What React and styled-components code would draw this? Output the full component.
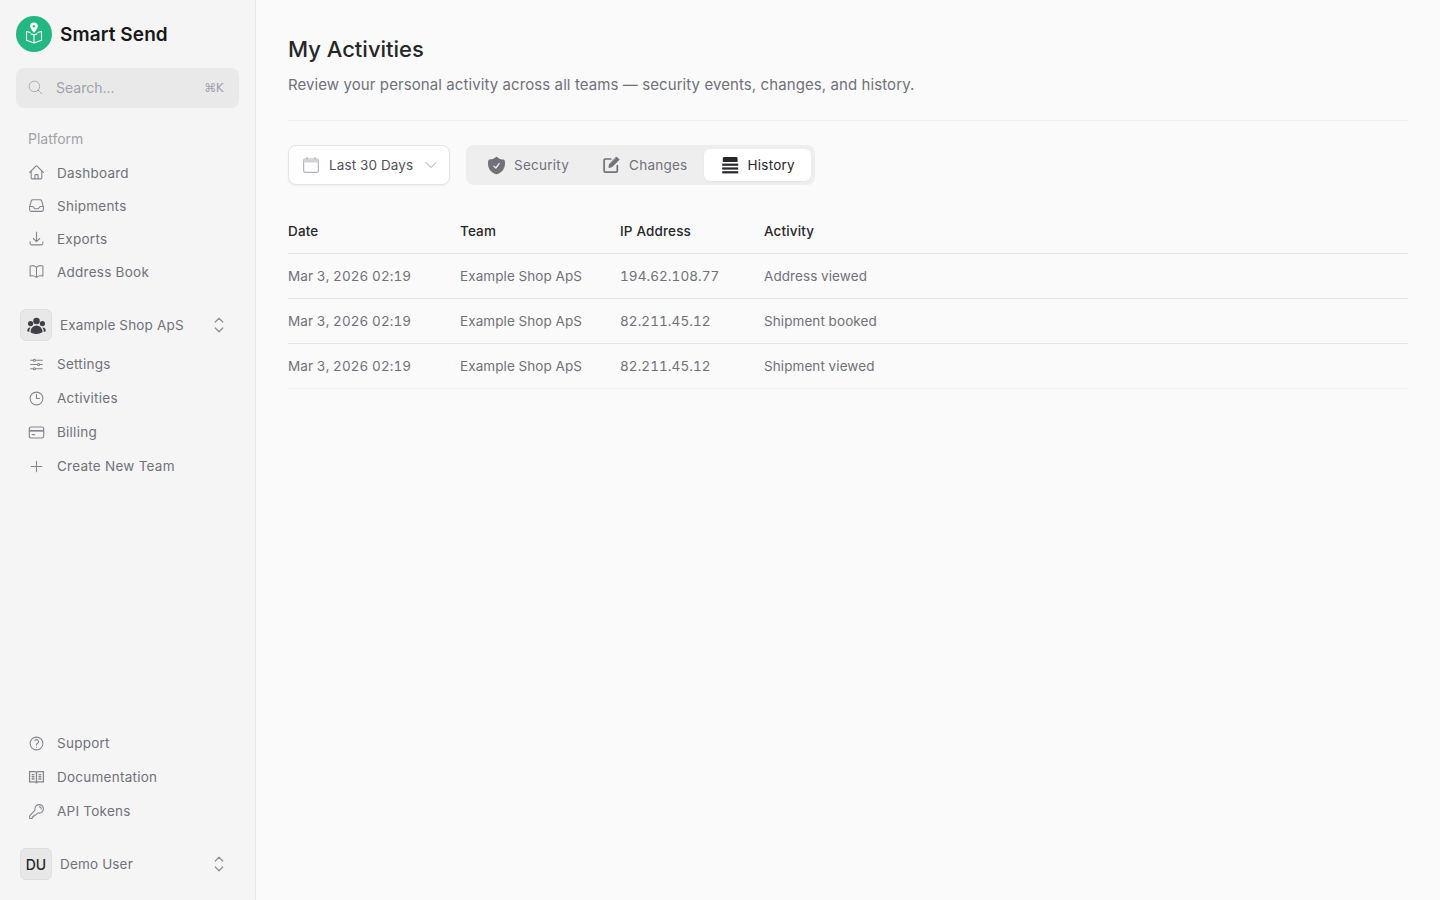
import React from 'react'
import styled, { createGlobalStyle } from 'styled-components'
import {
  HiOutlineHome,
  HiOutlineInbox,
  HiOutlineArrowDownTray,
  HiOutlineBookOpen,
  HiOutlineAdjustmentsHorizontal,
  HiOutlineClock,
  HiOutlinePlus,
  HiOutlineQuestionMarkCircle,
  HiOutlineKey,
  HiOutlineMagnifyingGlass,
  HiOutlineChevronUpDown,
  HiOutlineChevronDown,
  HiUserGroup,
  HiShieldCheck,
} from 'react-icons/hi2'

const GlobalStyle = createGlobalStyle`
  html, body {
    margin: 0;
    padding: 0;
    height: 100%;
    background: #fafafa;
    font-family: Inter, "Liberation Sans", sans-serif;
    -webkit-font-smoothing: antialiased;
  }
  * { box-sizing: border-box; }
`

const Layout = styled.div`
  display: flex;
  height: 900px;
  overflow: hidden;
`

const Sidebar = styled.aside`
  width: 256px;
  flex: none;
  height: 100%;
  background: #f5f5f5;
  border-right: 1px solid #e5e5e5;
  padding: 16px 16px 19px;
  display: flex;
  flex-direction: column;
`

const Brand = styled.div`
  display: flex;
  align-items: center;
  gap: 8px;
  height: 36px;
`

const BrandName = styled.span`
  font-size: 19px;
  font-weight: 600;
  letter-spacing: 0.1px;
  color: #18181b;
`

const LogoMark = styled.div`
  width: 36px;
  height: 36px;
  border-radius: 50%;
  background: #22b783;
  display: flex;
  align-items: center;
  justify-content: center;
`

const SearchBox = styled.div`
  margin-top: 16px;
  height: 40px;
  border-radius: 8px;
  background: #e9e9ea;
  display: flex;
  align-items: center;
  padding: 0 16px 1px 11px;
  color: #a1a1aa;
  font-size: 14px;
  svg { font-size: 17px; flex: none; stroke-width: 1.2; }
`

const SearchText = styled.span`
  margin-left: 12px;
  flex: 1;
`

const Shortcut = styled.span`
  font-size: 12px;
  font-family: "DejaVu Sans", Inter, sans-serif;
  letter-spacing: -0.5px;
`

const SectionLabel = styled.div`
  margin-top: 22px;
  padding-left: 12px;
  height: 18px;
  line-height: 18px;
  font-size: 14px;
  color: #a1a1aa;
`

const NavList = styled.nav`
  display: flex;
  flex-direction: column;
  margin-top: ${(p) => p.$top || 0}px;
`

const NavItem = styled.a`
  height: ${(p) => p.$height || 33}px;
  display: flex;
  align-items: center;
  gap: 12px;
  padding-left: 12px;
  color: #71717a;
  font-size: 13.5px;
  letter-spacing: 0.25px;
  svg { width: 17px; height: 17px; flex: none; color: #85858e; }
`

const Switcher = styled.div`
  height: 34px;
  display: flex;
  align-items: center;
  padding: 0 8px 0 4px;
  margin-top: ${(p) => p.$top || 0}px;
  color: #71717a;
  font-size: 13.5px;
  letter-spacing: 0.16px;
`

const Avatar = styled.div`
  width: 32px;
  height: 32px;
  flex: none;
  border-radius: 6px;
  background: #e8e8e9;
  border: 1px solid #dedee0;
  display: flex;
  align-items: center;
  justify-content: center;
  color: #27272a;
  font-size: 14px;
  font-weight: 500;
  letter-spacing: 0;
  svg { font-size: 21px; color: #3f3f46; }
`

const SwitcherName = styled.span`
  margin-left: 8px;
  flex: 1;
`

const UpDown = styled(HiOutlineChevronUpDown)`
  font-size: 24px;
  flex: none;
  stroke-width: 1.3;
  color: #8f8f98;
`

const Spacer = styled.div`
  flex: 1;
`

const Main = styled.main`
  flex: 1;
  min-width: 0;
  padding: 32px 32px 0;
`

const Title = styled.h1`
  margin: 0;
  font-size: 22px;
  line-height: 34px;
  font-weight: 500;
  color: #27272a;
`

const Subtitle = styled.p`
  margin: 7px 0 0;
  font-size: 15px;
  line-height: 24px;
  letter-spacing: 0.09px;
  color: #71717a;
`

const Divider = styled.hr`
  margin: 23px 0 24px;
  border: 0;
  border-top: 1px solid #efeff0;
`

const Toolbar = styled.div`
  display: flex;
  align-items: center;
  gap: 16px;
`

const DateSelect = styled.div`
  width: 162px;
  height: 40px;
  background: #fff;
  border: 1px solid #e4e4e7;
  border-radius: 8px;
  box-shadow: 0 1px 2px rgba(0, 0, 0, 0.05);
  display: flex;
  align-items: center;
  padding: 0 10px 0 13px;
  color: #52525b;
  font-size: 13.5px;
`

const DateLabel = styled.span`
  margin-left: 9px;
  flex: 1;
  letter-spacing: 0.1px;
`

const SelectChevron = styled(HiOutlineChevronDown)`
  font-size: 16px;
  flex: none;
  color: #a1a1aa;
`

const Tabs = styled.div`
  height: 40px;
  padding: 4px;
  background: #eeeeef;
  border-radius: 8px;
  display: flex;
  align-items: center;
`

const Tab = styled.div`
  height: 32px;
  padding: 0 16px 0 18px;
  display: flex;
  align-items: center;
  gap: 8px;
  border-radius: 6px;
  font-size: 13.5px;
  letter-spacing: 0.25px;
  color: ${(p) => (p.$active ? '#27272a' : '#71717a')};
  background: ${(p) => (p.$active ? '#fff' : 'transparent')};
  box-shadow: ${(p) => (p.$active ? '0 1px 2px rgba(0,0,0,0.05)' : 'none')};
  svg { width: 18px; height: 18px; flex: none; }
`

const ShieldIcon = styled(HiShieldCheck)`
  && { width: 21px; height: 21px; margin: 0 -1px 0 -2px; }
`

const Table = styled.table`
  width: 100%;
  margin-top: 23px;
  border-collapse: collapse;
  table-layout: fixed;
  font-size: 13.5px;
`

const Th = styled.th`
  height: 45px;
  padding: 1px 0 0;
  text-align: left;
  font-weight: 500;
  letter-spacing: 0.15px;
  color: #27272a;
  border-bottom: 1px solid #e4e4e7;
  width: ${(p) => p.$width || 'auto'};
`

const Td = styled.td`
  height: 45px;
  padding: 0;
  color: #71717a;
  font-variant-numeric: tabular-nums;
  letter-spacing: 0.08px;
  border-bottom: 1px solid #e4e4e7;
`

const LastRow = styled.tr`
  td { border-bottom-color: #f0f0f1; }
`

const Logo = () => (
  <svg width="24" height="24" viewBox="0 0 24 24" fill="none" stroke="#fff" strokeWidth="1.1" strokeLinejoin="round">
    <path d="M12 1c-1.900 0-3.300 1.400-3.300 3.200 0 2 1.800 3.800 3.300 5.800 1.500-2 3.300-3.800 3.300-5.800C15.300 2.400 13.900 1 12 1z" fill="#fff" />
    <circle cx="12" cy="4.200" r="1.200" fill="#22b783" stroke="none" />
    <path d="M8.500 10.500 4.500 9.500v8.700L12 21l7.500-2.800V9.500l-4 1" />
    <path d="M12 12.800V21" />
    <path d="M8.500 11.800 12 12.800l3.500-1" />
  </svg>
)

const BillingIcon = () => (
  <svg viewBox="0 0 16 16" fill="none" stroke="currentColor" strokeWidth="1.100">
    <rect x="1.200" y="2.800" width="13.600" height="10.400" rx="1.800" />
    <path d="M1.200 6.400h13.600" strokeWidth="1.600" />
    <path d="M3.500 10h3.200" />
  </svg>
)

const DocsIcon = () => (
  <svg viewBox="0 0 16 16" fill="none" stroke="currentColor" strokeWidth="1.200">
    <path d="M1.500 2.500h5.200c.7 0 1.300.5 1.300 1.200 0-.7.6-1.200 1.300-1.200h5.200v9.700H9.500c-.8 0-1.500.5-1.500 1.300 0-.8-.7-1.300-1.500-1.300h-5z" />
    <path d="M8 3.700v9.800M3.500 5.200h2.600M3.500 7.300h2.600M3.500 9.400h2.600M9.900 5.200h2.600M9.900 7.300h2.600M9.900 9.400h2.600" />
  </svg>
)

const CalendarIcon = () => (
  <svg width="18" height="18" viewBox="0 0 18 18" fill="none" stroke="#b4b4ba" strokeWidth="1.200">
    <rect x="1.600" y="3" width="14.800" height="13.400" rx="1.600" />
    <path d="M1.600 3.500h14.800v3H1.600z" fill="#d4d4d8" stroke="none" />
    <path d="M5 1.200v2.600M13 1.200v2.600" />
  </svg>
)

const ChangesIcon = () => (
  <svg viewBox="0 0 18 18" fill="none" stroke="currentColor" strokeWidth="1.700" strokeLinejoin="round" strokeLinecap="round">
    <path d="M7.800 3H2.300a1.200 1.200 0 0 0-1.200 1.200V15a1.200 1.200 0 0 0 1.200 1.200h10.800a1.200 1.200 0 0 0 1.200-1.200V9.500" />
    <path d="M13.700 1.200 16.100 3.600 8.900 10.800 5.900 11.400 6.500 8.400z" fill="currentColor" strokeWidth="1" />
  </svg>
)

const HistoryIcon = () => (
  <svg viewBox="0 0 18 18" fill="currentColor">
    <path d="M2.200 1h12a1.400 1.400 0 0 1 1.400 1.400V6H.8V2.400A1.400 1.400 0 0 1 2.200 1z" />
    <rect x="0.200" y="7.600" width="16" height="2.200" />
    <rect x="0.200" y="11.400" width="16" height="2.200" />
    <rect x="0.200" y="15.200" width="16" height="2.200" />
  </svg>
)

const platformLinks = [
  { label: 'Dashboard', icon: <HiOutlineHome /> },
  { label: 'Shipments', icon: <HiOutlineInbox /> },
  { label: 'Exports', icon: <HiOutlineArrowDownTray /> },
  { label: 'Address Book', icon: <HiOutlineBookOpen /> },
]

const teamLinks = [
  { label: 'Settings', icon: <HiOutlineAdjustmentsHorizontal /> },
  { label: 'Activities', icon: <HiOutlineClock /> },
  { label: 'Billing', icon: <BillingIcon /> },
  { label: 'Create New Team', icon: <HiOutlinePlus /> },
]

const footerLinks = [
  { label: 'Support', icon: <HiOutlineQuestionMarkCircle /> },
  { label: 'Documentation', icon: <DocsIcon /> },
  { label: 'API Tokens', icon: <HiOutlineKey /> },
]

const rows = [
  { date: 'Mar 3, 2026 02:19', team: 'Example Shop ApS', ip: '194.62.108.77', activity: 'Address viewed' },
  { date: 'Mar 3, 2026 02:19', team: 'Example Shop ApS', ip: '82.211.45.12', activity: 'Shipment booked' },
  { date: 'Mar 3, 2026 02:19', team: 'Example Shop ApS', ip: '82.211.45.12', activity: 'Shipment viewed' },
]

function Links({ items, height }) {
  return items.map((item) => (
    <NavItem key={item.label} $height={height}>
      {item.icon}
      {item.label}
    </NavItem>
  ))
}

export default function App() {
  return (
    <Layout>
      <GlobalStyle />
      <Sidebar>
        <Brand>
          <LogoMark>
            <Logo />
          </LogoMark>
          <BrandName>Smart Send</BrandName>
        </Brand>

        <SearchBox>
          <HiOutlineMagnifyingGlass />
          <SearchText>Search...</SearchText>
          <Shortcut>⌘K</Shortcut>
        </SearchBox>

        <SectionLabel>Platform</SectionLabel>
        <NavList $top={8}>
          <Links items={platformLinks} />
        </NavList>

        <Switcher $top={20}>
          <Avatar>
            <HiUserGroup />
          </Avatar>
          <SwitcherName>Example Shop ApS</SwitcherName>
          <UpDown />
        </Switcher>
        <NavList $top={5}>
          <Links items={teamLinks} height={34} />
        </NavList>

        <Spacer />

        <NavList>
          <Links items={footerLinks} height={34} />
        </NavList>
        <Switcher $top={19}>
          <Avatar>DU</Avatar>
          <SwitcherName>Demo User</SwitcherName>
          <UpDown />
        </Switcher>
      </Sidebar>

      <Main>
        <Title>My Activities</Title>
        <Subtitle>Review your personal activity across all teams — security events, changes, and history.</Subtitle>
        <Divider />

        <Toolbar>
          <DateSelect>
            <CalendarIcon />
            <DateLabel>Last 30 Days</DateLabel>
            <SelectChevron />
          </DateSelect>
          <Tabs>
            <Tab>
              <ShieldIcon />
              Security
            </Tab>
            <Tab>
              <ChangesIcon />
              Changes
            </Tab>
            <Tab $active>
              <HistoryIcon />
              History
            </Tab>
          </Tabs>
        </Toolbar>

        <Table>
          <thead>
            <tr>
              <Th $width="172px">Date</Th>
              <Th $width="160px">Team</Th>
              <Th $width="144px">IP Address</Th>
              <Th>Activity</Th>
            </tr>
          </thead>
          <tbody>
            {rows.map((row, i) => {
              const Row = i === rows.length - 1 ? LastRow : 'tr'
              return (
                <Row key={i}>
                  <Td>{row.date}</Td>
                  <Td>{row.team}</Td>
                  <Td>{row.ip}</Td>
                  <Td>{row.activity}</Td>
                </Row>
              )
            })}
          </tbody>
        </Table>
      </Main>
    </Layout>
  )
}
